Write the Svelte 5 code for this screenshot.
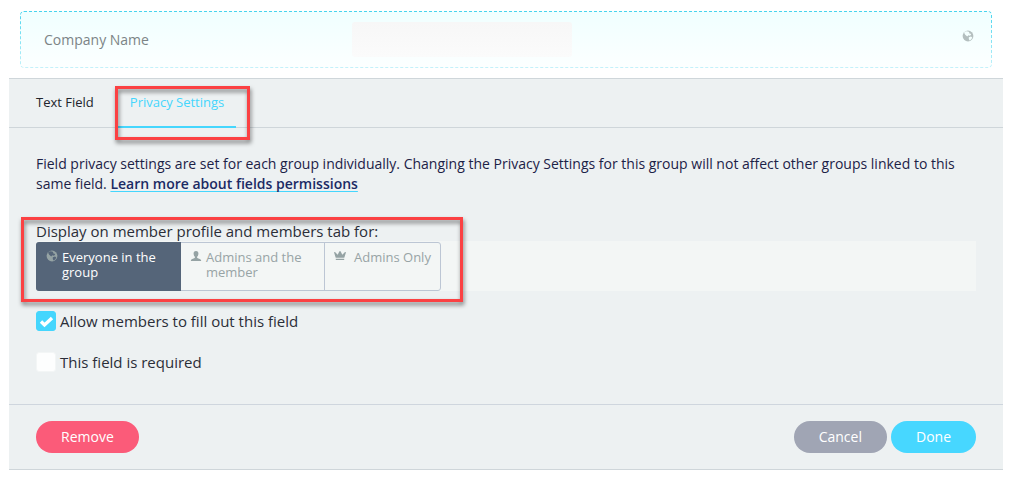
<script lang="ts">
  type Tab = "text" | "privacy";

  const tabs: { id: Tab; label: string }[] = [
    { id: "text", label: "Text Field" },
    { id: "privacy", label: "Privacy Settings" },
  ];

  const audiences = [
    { value: "everyone", icon: "globe", label: "Everyone in the group" },
    { value: "member", icon: "person", label: "Admins and the member" },
    { value: "admins", icon: "crown", label: "Admins Only" },
  ];

  let activeTab = $state<Tab>("privacy");
  let audience = $state("everyone");
  let allowFill = $state(true);
  let required = $state(false);
</script>

{#snippet icon(name: string)}
  <svg class="icon icon--{name}" viewBox="0 0 12 12" aria-hidden="true">
    {#if name === "globe"}
      <circle cx="6" cy="6" r="5.4" fill="currentColor" />
      <path
        class="land"
        d="M2 2.5 4 1.2 6.2 1.4 7.4 2.2 6.8 3.2 8.3 3.5 9.2 4.8 7.8 5.8 6.5 5.2 5.2 6.4 4.1 5.5 3.2 4.7ZM6.8 7.2 9 6.6 10.3 7.5 9.2 9.4 7.5 10.6 6.8 9Z"
      />
    {:else if name === "person"}
      <path
        fill="currentColor"
        d="M6 1C4.1 1 3.5 2.2 3.6 3.8c.1 1.3.6 2.4 1.3 3v1C4.5 8.7 1.4 8.8.9 10.2V11h10.2v-.8C10.6 8.8 7.5 8.7 7.1 7.8v-1c.7-.6 1.2-1.7 1.3-3C8.5 2.2 7.9 1 6 1Z"
      />
    {:else}
      <path
        fill="currentColor"
        d="M0 2.3 1 1.9 3.7 4.8 5.4 1.3h1.2l1.7 3.5L11 1.9l1 .4-1.7 5.5H1.7ZM1.8 8.7h8.4V10H1.8Z"
      />
    {/if}
  </svg>
{/snippet}

<main>
  <div class="preview">
    <label for="company">Company Name</label>
    <input id="company" type="text" readonly />
    {@render icon("globe")}
  </div>

  <section class="panel">
    <div class="tabs" role="tablist">
      {#each tabs as tab (tab.id)}
        <button
          class="tab"
          class:active={activeTab === tab.id}
          type="button"
          role="tab"
          aria-selected={activeTab === tab.id}
          onclick={() => (activeTab = tab.id)}
        >
          {tab.label}
          {#if tab.id === "privacy"}
            <span class="callout callout--tab"></span>
          {/if}
        </button>
      {/each}
    </div>

    <div class="body">
      <p>
        Field privacy settings are set for each group individually. Changing the Privacy Settings
        for this group will not affect other groups linked to this same field.
        <a href="#permissions">Learn more about fields permissions</a>
      </p>

      <div class="visibility" role="radiogroup" aria-labelledby="visibility-label">
        <div id="visibility-label" class="title">Display on member profile and members tab for:</div>
        <div class="strip">
          <div class="segments">
            {#each audiences as item (item.value)}
              <label class="segment" class:selected={audience === item.value}>
                <input type="radio" name="audience" value={item.value} bind:group={audience} />
                {@render icon(item.icon)}
                <span>{item.label}</span>
              </label>
            {/each}
          </div>
        </div>
        <span class="callout callout--visibility"></span>
      </div>

      <div class="checks">
        <label class="check">
          <input type="checkbox" bind:checked={allowFill} />
          Allow members to fill out this field
        </label>
        <label class="check">
          <input type="checkbox" bind:checked={required} />
          This field is required
        </label>
      </div>
    </div>

    <footer>
      <button class="btn btn--remove" type="button">Remove</button>
      <button class="btn btn--cancel" type="button">Cancel</button>
      <button class="btn btn--done" type="button">Done</button>
    </footer>
  </section>
</main>

<style>
  :global(body) {
    background: #fff;
  }

  main,
  main * {
    box-sizing: border-box;
  }

  main {
    padding: 11px 10px 12px 9px;
    font-family: "Open Sans", sans-serif;
    color: #2b2e38;
  }

  button,
  input {
    font-family: inherit;
  }

  .icon {
    flex: none;
    width: 12px;
    height: 12px;
    color: #a0aaa8;
  }

  .preview {
    position: relative;
    display: grid;
    grid-template-columns: 308px 220px 1fr;
    align-items: start;
    margin: 0 11px;
    padding: 11px 18px 11px 24px;
    border-radius: 4px;
    background: linear-gradient(#f0ffff, #fcffff);
    font-size: 14px;
  }

  /* dashed outline that fades towards the bottom */
  .preview::before {
    content: "";
    position: absolute;
    inset: 0;
    border: 1px dashed #46d3ee;
    border-radius: 4px;
    mask-image: linear-gradient(#000, rgba(0, 0, 0, 0.3));
    pointer-events: none;
  }

  .preview label {
    line-height: 35px;
    color: #7c8486;
  }

  .preview input {
    width: 100%;
    height: 35px;
    padding: 0 8px;
    border: 0;
    border-radius: 3px;
    background: linear-gradient(#f7f7f7, #fbfbfb);
  }

  .preview .icon {
    justify-self: end;
    margin-top: 8px;
    color: #b4bfbf;
  }

  .land {
    fill: #f4fffe;
  }

  .panel {
    margin-top: 10px;
    border: solid #cfd6da;
    border-width: 1px 0;
    background: #edf1f2;
  }

  .tabs {
    display: flex;
    gap: 12px;
    height: 49px;
    padding: 0 15px;
    border-bottom: 1px solid #cfd6da;
  }

  .tab {
    position: relative;
    height: 49px;
    padding: 0 12px 2px;
    border: 0;
    border-bottom: 2px solid transparent;
    background: none;
    font-size: 13px;
    color: #22242c;
  }

  .tab.active {
    border-color: #45d6fd;
    color: #45d6fd;
  }

  .callout {
    position: absolute;
    border: 3px solid #fb4143;
    filter: drop-shadow(1px 3px 2px rgba(0, 0, 0, 0.5));
    pointer-events: none;
  }

  .callout--tab {
    inset: 7px -14px -14px -3px;
  }

  .body {
    padding: 26px 27px 32px;
  }

  p {
    margin: 0;
    font-size: 14px;
    line-height: 20px;
    color: #1c2247;
  }

  a {
    font-weight: 600;
    color: #1b2a64;
    text-decoration: underline 1px #45d6fd;
    text-decoration-skip-ink: none;
    text-underline-offset: 2px;
  }

  .visibility {
    position: relative;
    margin-top: 27px;
  }

  .title {
    font-size: 15px;
    line-height: 20px;
  }

  .strip {
    padding-top: 1px;
    background: #f3f6f5;
  }

  .segments {
    display: flex;
    width: 405px;
    height: 49px;
    border: 1px solid #bcc6d4;
    border-radius: 3px;
  }

  .segment {
    display: flex;
    flex: none;
    gap: 4px;
    width: 143px;
    padding: 7px 9px;
    font-size: 13px;
    line-height: 15px;
    color: #98a4a5;
  }

  .segment:last-child {
    flex: 1;
    gap: 8px;
    border-left: 1px solid #bcc6d4;
    white-space: nowrap;
  }

  .segment input {
    position: absolute;
    opacity: 0;
    pointer-events: none;
  }

  .segment .icon {
    color: #95a3a4;
  }

  .segment.selected {
    margin: -1px 0 -1px -1px;
    padding: 8px 10px;
    width: 145px;
    border-radius: 3px 0 0 3px;
    background: #556579;
    color: #fff;
  }

  .segment .land {
    fill: #556579;
  }

  .callout--visibility {
    top: -4px;
    left: -15px;
    width: 442px;
    height: 85px;
  }

  .checks {
    display: grid;
    gap: 21px;
    margin-top: 20px;
  }

  .check {
    display: flex;
    gap: 4px;
    align-items: center;
    font-size: 15px;
    line-height: 20px;
  }

  .check input {
    appearance: none;
    width: 20px;
    height: 20px;
    margin: 0;
    border: 1px solid #f3f6f6;
    border-radius: 3px;
    background: #fdfefe;
  }

  .check input:checked {
    border-color: #45d6fd;
    background: #45d6fd
      url("data:image/svg+xml,%3Csvg xmlns='http://www.w3.org/2000/svg' viewBox='0 0 18 18'%3E%3Cpath d='M4 9.5 7.5 13 15 6' fill='none' stroke='white' stroke-width='3.4'/%3E%3C/svg%3E");
  }

  footer {
    display: flex;
    gap: 4px;
    padding: 16px 27px;
    border-top: 1px solid #cfd6de;
  }

  .btn {
    height: 32px;
    padding: 0 25px 1px;
    border: 0;
    border-radius: 16px;
    font-size: 14px;
    color: #fff;
  }

  .btn--remove {
    margin-right: auto;
    background: #fb5b79;
  }

  .btn--cancel {
    background: #a0a5b4;
  }

  .btn--done {
    background: #47d7ff;
  }
</style>
